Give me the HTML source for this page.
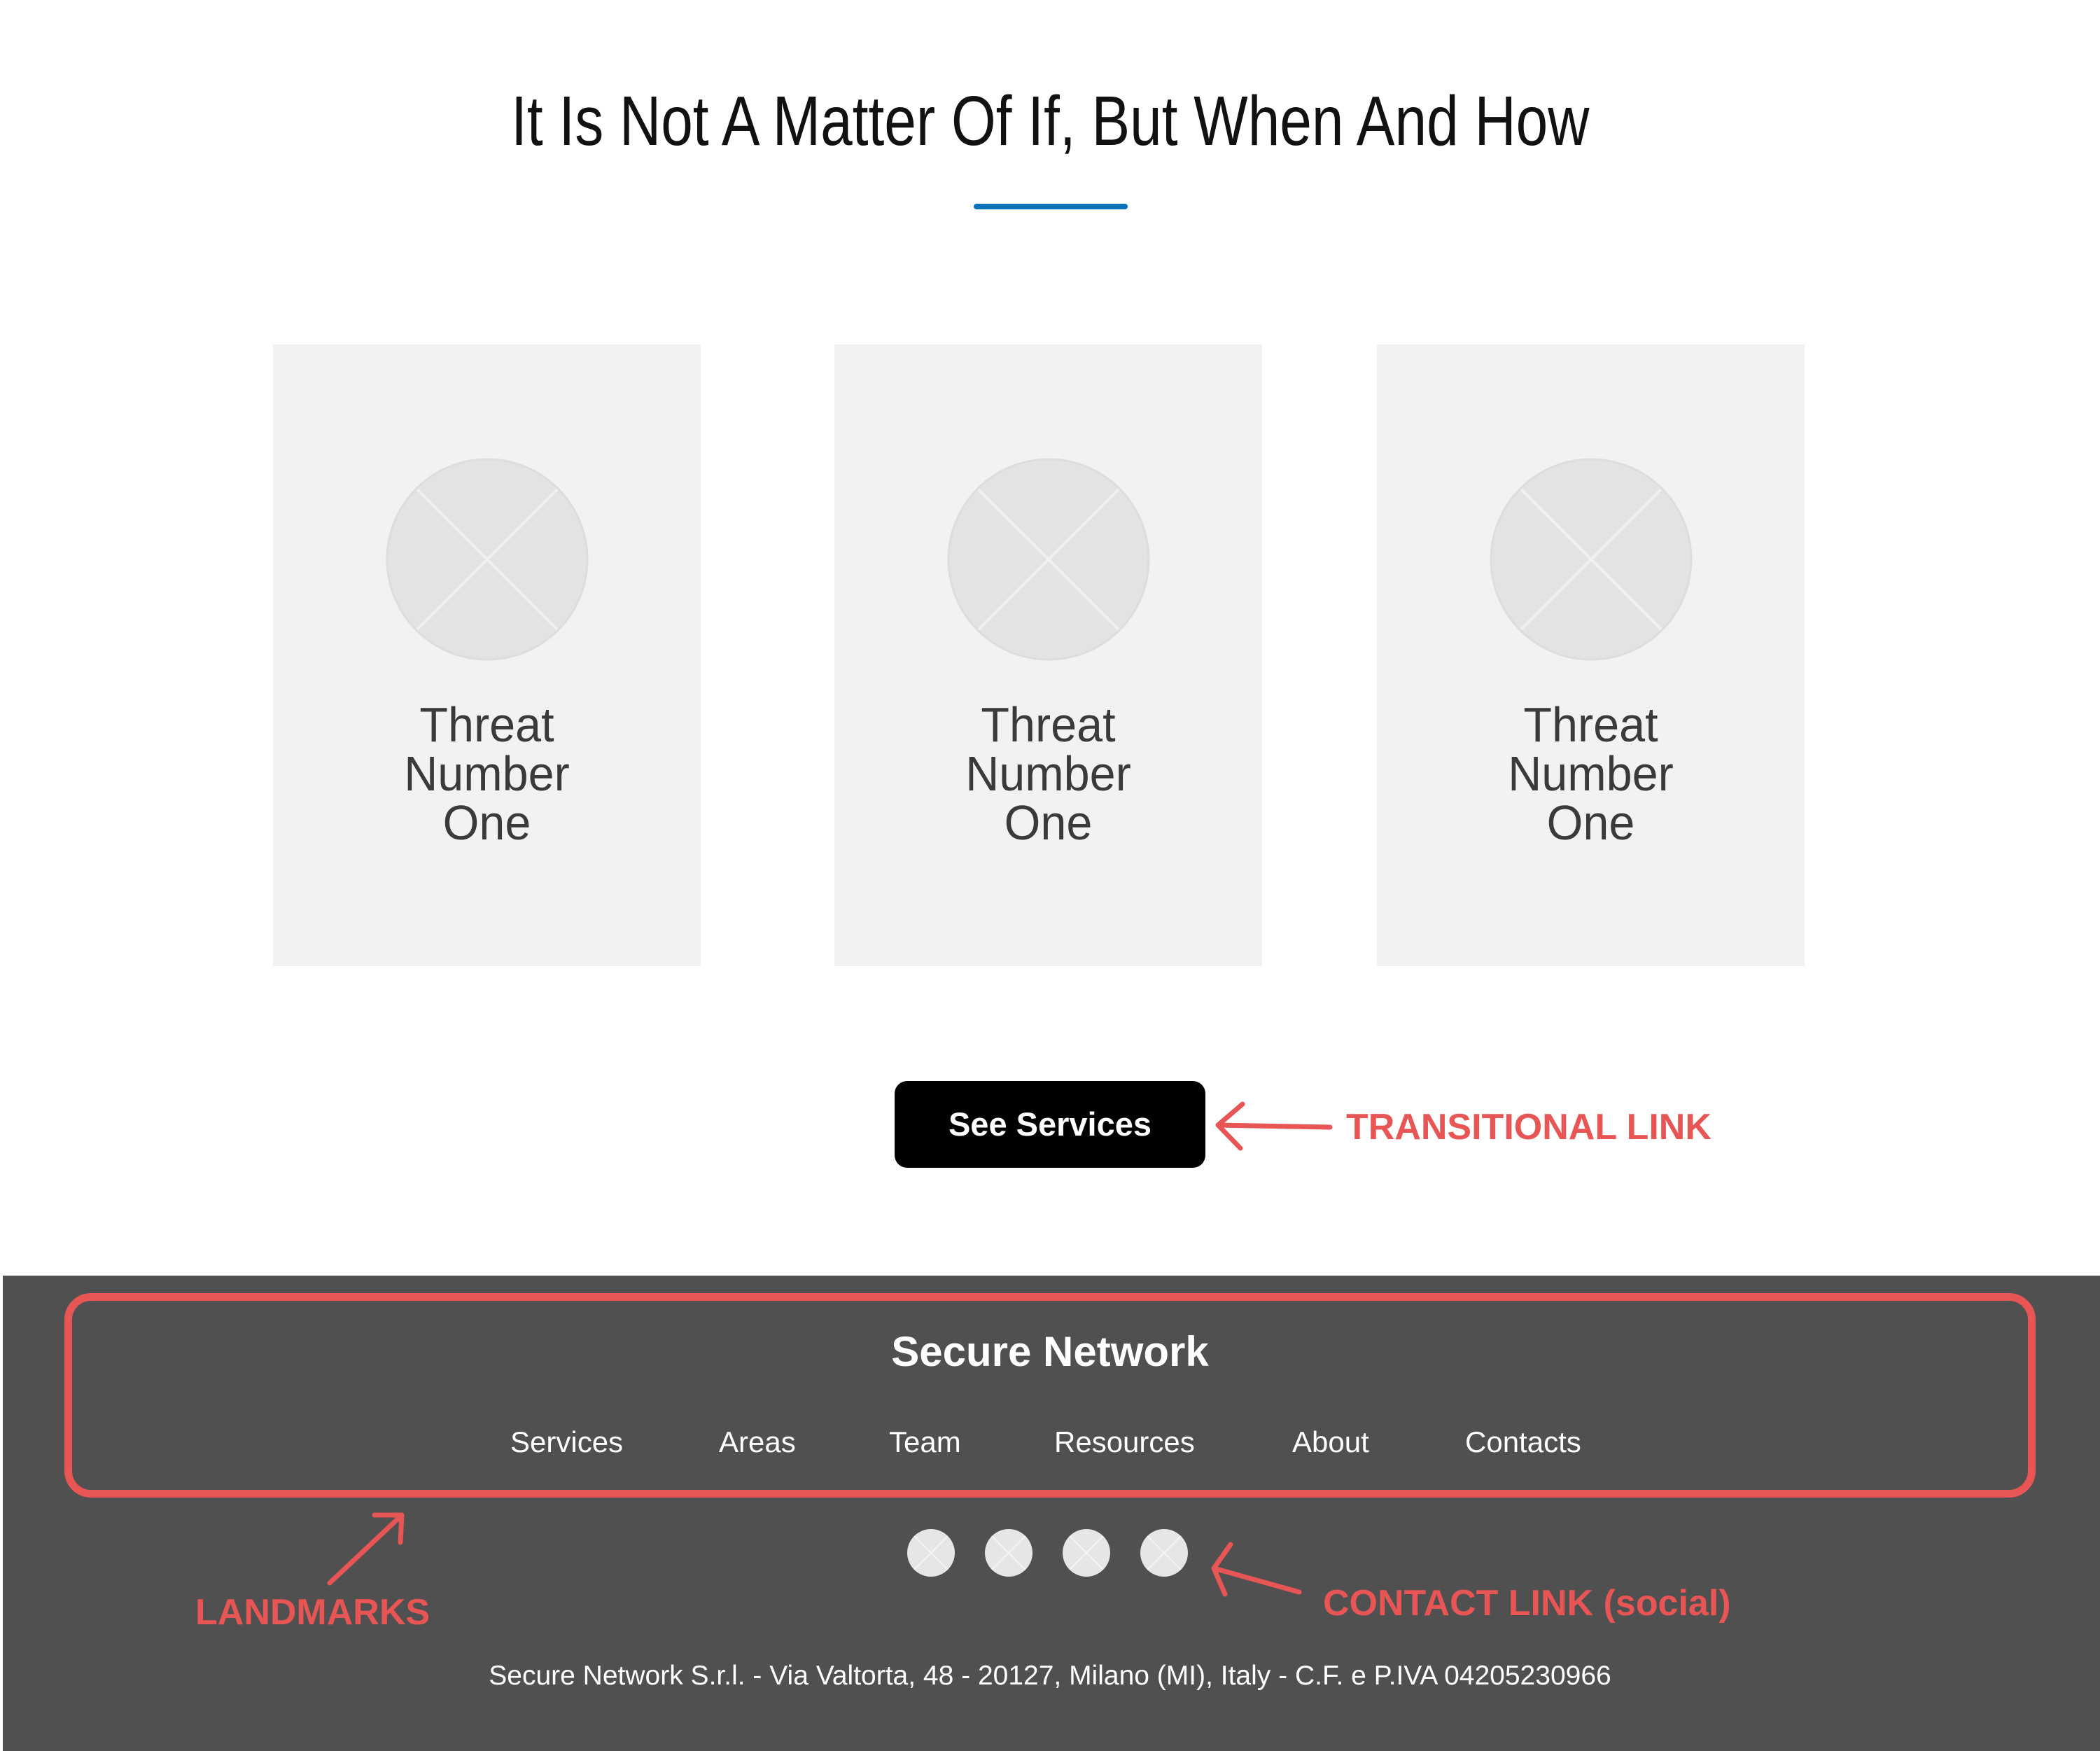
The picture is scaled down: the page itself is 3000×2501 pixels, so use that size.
<!DOCTYPE html>
<html><head><meta charset="utf-8"><style>
body{margin:0;width:3000px;height:2501px;position:relative;background:#fff;font-family:"Liberation Sans",sans-serif;overflow:hidden}
.a{position:absolute}
.title{left:0;width:3000px;top:118px;text-align:center;font-size:100px;line-height:110px;color:#111}
.title span{display:inline-block;transform:scaleX(0.82)}
.card{top:492px;width:611px;height:888px;background:#f2f2f2}
.card svg{position:absolute;left:161px;top:162px}
.ct{position:absolute;top:508px;left:0;width:100%;text-align:center;font-size:70px;line-height:70px;color:#3a3a3a}
.ct span{display:inline-block;transform:scaleX(0.95)}
.red{color:#e85555;font-weight:bold}
.nav{top:2035px;font-size:42px;color:#fff;line-height:50px}
</style></head><body>
<div class="a title"><span>It Is Not A Matter Of If, But When And How</span></div>
<div class="a" style="left:1391px;top:291px;width:220px;height:8px;border-radius:4px;background:#0a73b8"></div>

<div class="a card" style="left:390px"><svg width="290" height="290"><circle cx="145" cy="145" r="143" fill="#e3e3e3" stroke="#ddd" stroke-width="3"/><path d="M45 45L245 245M245 45L45 245" stroke="#f0f0f0" stroke-width="4"/></svg><div class="ct"><span>Threat<br>Number<br>One</span></div></div>
<div class="a card" style="left:1192px"><svg width="290" height="290"><circle cx="145" cy="145" r="143" fill="#e3e3e3" stroke="#ddd" stroke-width="3"/><path d="M45 45L245 245M245 45L45 245" stroke="#f0f0f0" stroke-width="4"/></svg><div class="ct"><span>Threat<br>Number<br>One</span></div></div>
<div class="a card" style="left:1967px"><svg width="290" height="290"><circle cx="145" cy="145" r="143" fill="#e3e3e3" stroke="#ddd" stroke-width="3"/><path d="M45 45L245 245M245 45L45 245" stroke="#f0f0f0" stroke-width="4"/></svg><div class="ct"><span>Threat<br>Number<br>One</span></div></div>

<div class="a" style="left:1278px;top:1544px;width:444px;height:124px;background:#000;border-radius:18px;color:#fff;font-weight:bold;font-size:47px;line-height:124px;text-align:center">See Services</div>
<div class="a red" style="left:1923px;top:1580px;font-size:52px;line-height:60px">TRANSITIONAL LINK</div>

<div class="a" style="left:4px;top:1822px;width:2996px;height:679px;background:#505050"></div>
<div class="a" style="left:92px;top:1847px;width:2794px;height:270px;border:11px solid #e85555;border-radius:38px"></div>
<div class="a" style="left:0;width:3000px;top:1896px;text-align:center;color:#fff;font-weight:bold;font-size:60px;line-height:70px">Secure Network</div>
<div class="a nav" style="left:729px">Services</div>
<div class="a nav" style="left:1027px">Areas</div>
<div class="a nav" style="left:1270px">Team</div>
<div class="a nav" style="left:1506px">Resources</div>
<div class="a nav" style="left:1846px">About</div>
<div class="a nav" style="left:2093px">Contacts</div>
<svg class="a" style="left:1290px;top:2180px" width="420" height="80">
<g fill="#e6e6e6"><circle cx="40" cy="38" r="34"/><circle cx="151" cy="38" r="34"/><circle cx="262" cy="38" r="34"/><circle cx="373" cy="38" r="34"/></g>
<g stroke="#f4f4f4" stroke-width="2"><path d="M16 14L64 62M64 14L16 62M127 14L175 62M175 14L127 62M238 14L286 62M286 14L238 62M349 14L397 62M397 14L349 62"/></g></svg>
<svg class="a" style="left:0;top:0" width="3000" height="2501">
<g stroke="#e85555" stroke-width="7" fill="none" stroke-linecap="round" stroke-linejoin="round">
<path d="M1900 1610L1740 1607M1775 1577L1740 1607L1772 1640"/>
<path d="M471 2261L574 2164M535 2164L574 2164L572 2203"/>
<path d="M1856 2274L1734 2240M1758 2206L1734 2240L1750 2277"/>
</g></svg>
<div class="a red" style="left:279px;top:2274px;font-size:52px;line-height:58px">LANDMARKS</div>
<div class="a red" style="left:1890px;top:2260px;font-size:52px;line-height:60px">CONTACT LINK (social)</div>
<div class="a" style="left:0;width:3000px;top:2370px;text-align:center;color:#fff;font-size:39px;line-height:48px">Secure Network S.r.l. - Via Valtorta, 48 - 20127, Milano (MI), Italy - C.F. e P.IVA 04205230966</div>
</body></html>
